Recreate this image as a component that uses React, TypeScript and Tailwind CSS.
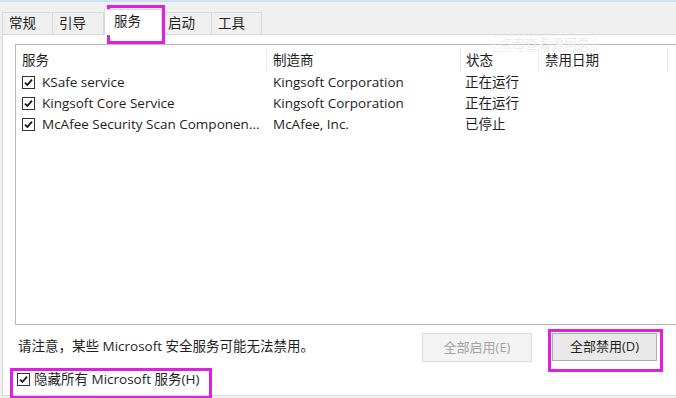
import React from "react";

const tabs = [
  { label: "常规", w: "w-[51px]", active: false },
  { label: "引导", w: "w-[51px]", active: false },
  { label: "服务", w: "w-[58px]", active: true },
  { label: "启动", w: "w-[50px]", active: false },
  { label: "工具", w: "w-[50px]", active: false },
];

const services = [
  { name: "KSafe service", maker: "Kingsoft Corporation", status: "正在运行" },
  { name: "Kingsoft Core Service", maker: "Kingsoft Corporation", status: "正在运行" },
  { name: "McAfee Security Scan Componen...", maker: "McAfee, Inc.", status: "已停止" },
];

function Check() {
  return (
    <span className="flex h-[13px] w-[13px] shrink-0 items-center justify-center border border-[#333333] bg-white">
      <svg width="9" height="9" viewBox="0 0 9 9">
        <path d="M1 4.6 L3.4 7 L8 1.6" fill="none" stroke="#1a1a1a" strokeWidth="1.8" />
      </svg>
    </span>
  );
}

export default function App() {
  return (
    <div
      className="relative h-[398px] w-[676px] overflow-hidden border-t-2 border-[#cfe1f3] bg-[#f0f0f0] text-[13.5px] text-[#1e1e1e]"
      style={{ fontFamily: '"Open Sans", "Noto Sans CJK SC", sans-serif' }}
    >
      {/* Tabs */}
      <div className="flex h-[32px] items-end pl-[2px]">
        {tabs.map((t) =>
          t.active ? (
            <div
              key={t.label}
              className={`relative z-10 -mb-px flex h-[26px] ${t.w} items-center border border-b-0 border-[#d9d9d9] bg-white pl-[9px] pb-[2px]`}
            >
              {t.label}
            </div>
          ) : (
            <div
              key={t.label}
              className={`flex h-[22px] ${t.w} items-center border border-l-0 border-b-0 border-[#d9d9d9] bg-[#f0f0f0] pl-[6px] first:border-l`}
            >
              {t.label}
            </div>
          )
        )}
      </div>

      {/* Panel */}
      <div className="ml-[2px] flex h-[362px] w-[700px] flex-col border border-[#d9d9d9] bg-white pl-[12px] pt-[9px]">
        {/* List */}
        <div className="h-[281px] w-[690px] border border-[#b9b9b9] bg-white">
          <div className="grid h-[27px] grid-cols-[250px_194px_78px_129px_1fr] items-center pt-[3px]">
            <div className="pl-[6px]">服务</div>
            <div className="flex h-full items-center border-l border-[#ececec] pl-[6px]">制造商</div>
            <div className="flex h-full items-center border-l border-[#ececec] pl-[5px]">状态</div>
            <div className="flex h-full items-center border-l border-[#ececec] pl-[6px]">禁用日期</div>
            <div className="h-full border-l border-[#ececec]"></div>
          </div>
          {services.map((s) => (
            <div key={s.name} className="grid h-[21px] grid-cols-[250px_194px_78px_1fr] items-center">
              <div className="flex items-center gap-[7px] pl-[6px]">
                <Check />
                <span className="whitespace-nowrap">{s.name}</span>
              </div>
              <div className="whitespace-nowrap pl-[7px]">{s.maker}</div>
              <div className="pl-[5px]">{s.status}</div>
              <div></div>
            </div>
          ))}
        </div>

        {/* Bottom row */}
        <div className="mt-[8px] flex w-[642px] items-start justify-between">
          <div className="pl-[3px] pt-[3px]">请注意，某些 Microsoft 安全服务可能无法禁用。</div>
          <div className="flex gap-[20px]">
            <button className="h-[29px] w-[110px] border border-[#dcdcdc] bg-[#f3f3f3] text-[13px] text-[#a3a3a3]">
              全部启用(E)
            </button>
            <button className="h-[28px] w-[105px] border border-[#adadad] bg-[#e9e9e9] text-[13px] text-[#1e1e1e]">
              全部禁用(D)
            </button>
          </div>
        </div>

        <div className="mt-[8px] flex h-[18px] items-center gap-[4px] pl-[2px]">
          <Check />
          <span>隐藏所有 Microsoft 服务(H)</span>
        </div>
      </div>

      {/* Watermark */}
      <div className="absolute left-[494px] top-[33px] border border-[#f3f3f3] px-[4px] text-[13px] leading-[15px] text-[#ececec]">
        点击查看源网页
      </div>

      {/* Highlight boxes */}
      <div className="pointer-events-none absolute left-[107px] top-[3px] h-[39px] w-[58px] border-[3px] border-[#dc22dc]" />
      <div className="pointer-events-none absolute left-[548px] top-[327px] h-[43px] w-[115px] border-[3px] border-[#dc22dc]" />
      <div className="pointer-events-none absolute left-[10px] top-[366px] h-[31px] w-[202px] border-[3px] border-[#dc22dc]" />
    </div>
  );
}
